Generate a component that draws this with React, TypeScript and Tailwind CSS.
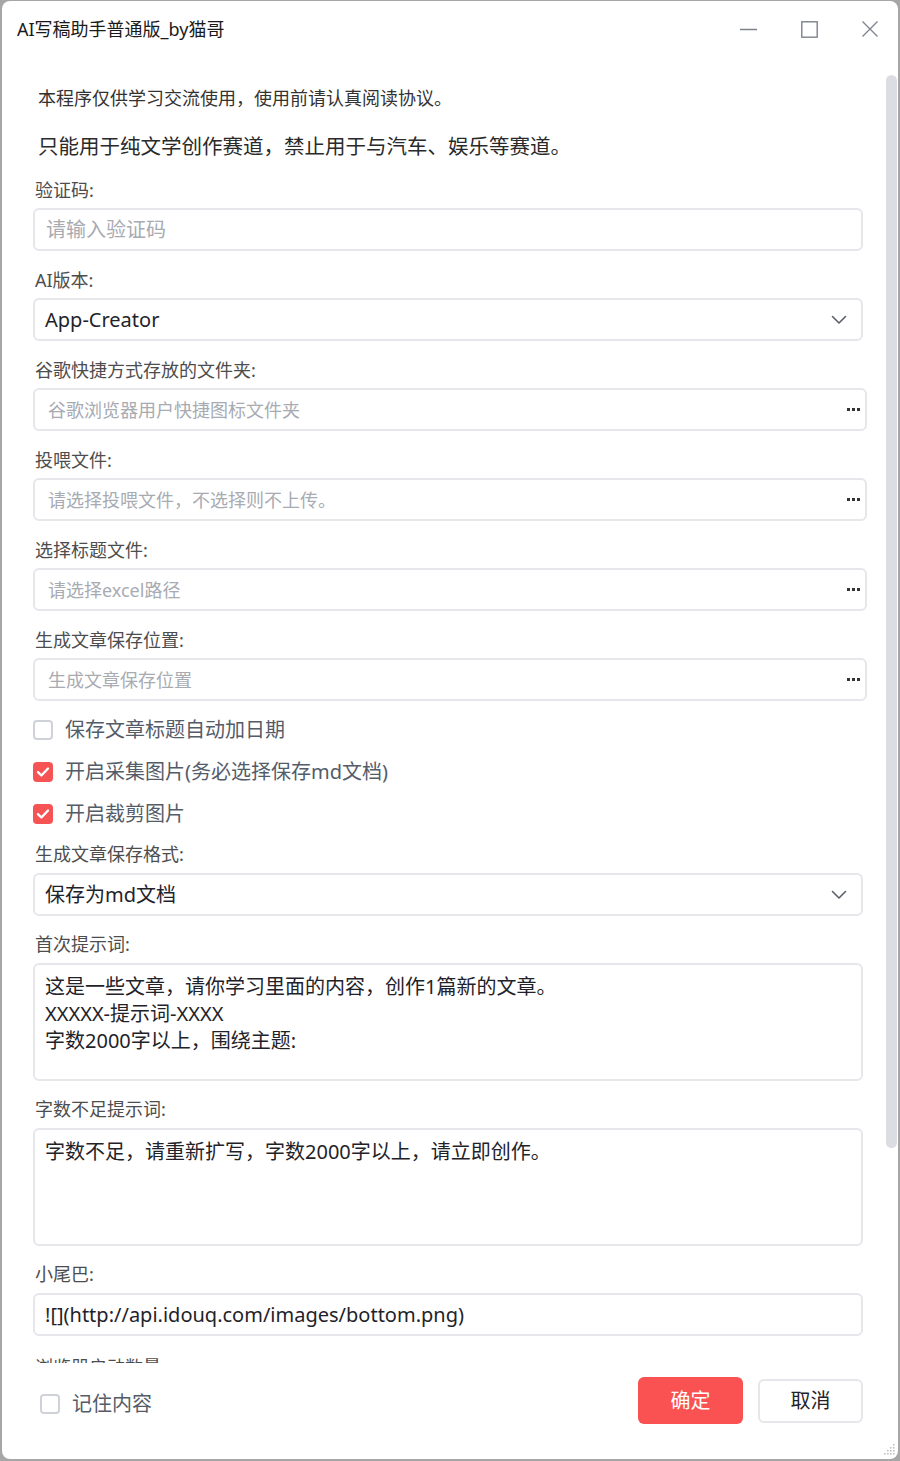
import React from "react";

const FONT = { fontFamily: '"Noto Sans", "Noto Sans CJK SC", sans-serif' };

function Label({ text, mt }: { text: string; mt: string }) {
  return (
    <div className={`${mt} h-[24px] pl-[2px] text-[18px] leading-[24px] text-[#4d4d4d] whitespace-nowrap`}>{text}</div>
  );
}

function Dots() {
  return (
    <div className="flex gap-[2px]">
      <span className="w-[3px] h-[3px] bg-[#333]" />
      <span className="w-[3px] h-[3px] bg-[#333]" />
      <span className="w-[3px] h-[3px] bg-[#333]" />
    </div>
  );
}

function PathInput({ placeholder }: { placeholder: string }) {
  return (
    <div className="mt-[6px] w-[834px] h-[43px] rounded-[6px] border-2 border-[#e6e6eb] flex items-center justify-between pl-[13px] pr-[5px]">
      <span className="text-[18px] leading-[24px] text-[#a8abb2] whitespace-nowrap">{placeholder}</span>
      <Dots />
    </div>
  );
}

function Chevron() {
  return (
    <svg width="16" height="10" viewBox="0 0 16 10" fill="none">
      <path d="M1.5 1.5 L8 8 L14.5 1.5" stroke="#5a5f66" strokeWidth="1.6" strokeLinecap="round" strokeLinejoin="round" />
    </svg>
  );
}

function Select({ value, mt }: { value: string; mt: string }) {
  return (
    <div className={`${mt} w-[830px] h-[43px] rounded-[6px] border-2 border-[#e6e6eb] flex items-center justify-between pl-[10px] pr-[14px]`}>
      <span className="text-[20px] leading-[26px] text-[#1f2329] whitespace-nowrap">{value}</span>
      <Chevron />
    </div>
  );
}

function Check({ checked, label, mt }: { checked: boolean; label: string; mt: string }) {
  return (
    <div className={`${mt} h-[24px] flex items-center gap-[12px]`}>
      {checked ? (
        <div className="w-[20px] h-[20px] rounded-[4px] bg-[#f65454] flex items-center justify-center">
          <svg width="14" height="12" viewBox="0 0 14 12" fill="none">
            <path d="M2 6.2 L5.4 9.5 L12 2.5" stroke="#fff" strokeWidth="2.4" strokeLinecap="round" strokeLinejoin="round" />
          </svg>
        </div>
      ) : (
        <div className="w-[20px] h-[20px] rounded-[4px] border-2 border-[#cfd2d8] bg-white" />
      )}
      <span className="text-[20px] leading-[24px] text-[#545c69] whitespace-nowrap">{label}</span>
    </div>
  );
}

function TextArea({ lines, mt }: { lines: string[]; mt: string }) {
  return (
    <div className={`${mt} w-[830px] h-[118px] rounded-[6px] border-2 border-[#e6e6eb] pl-[10px] pt-[8px]`}>
      {lines.map((l, i) => (
        <div key={i} className="text-[20px] leading-[27px] text-[#1f2329] whitespace-nowrap">{l}</div>
      ))}
    </div>
  );
}

export default function App() {
  return (
    <div className="w-[900px] h-[1461px] bg-[#a6a6a6] pl-[2px] pr-[2px] pt-[1px] pb-[2px]" style={FONT}>
      <div className="relative w-[896px] h-[1458px] bg-white rounded-[8px] flex flex-col overflow-hidden">
        {/* Title bar */}
        <div className="h-[56px] flex items-center justify-between pl-[15px] pr-[20px]">
          <span className="text-[18px] leading-[24px] text-[#1a1a1a] whitespace-nowrap">AI写稿助手普通版_by猫哥</span>
          <div className="flex items-center gap-[44px]">
            <svg width="17" height="16" viewBox="0 0 17 16"><path d="M0 8.5 H17" stroke="#7d838c" strokeWidth="1.4" /></svg>
            <svg width="17" height="17" viewBox="0 0 17 17"><rect x="0.8" y="0.8" width="15.4" height="15.4" fill="none" stroke="#7d838c" strokeWidth="1.4" /></svg>
            <svg width="16" height="16" viewBox="0 0 16 16"><path d="M0.5 0.5 L15.5 15.5 M15.5 0.5 L0.5 15.5" stroke="#7d838c" strokeWidth="1.3" /></svg>
          </div>
        </div>

        {/* Main */}
        <div className="flex h-[1306px]">
          <div className="flex-1 overflow-hidden pl-[31px]">
            <div className="mt-[29px] pl-[5px] h-[24px] text-[18px] leading-[24px] text-[#333] whitespace-nowrap">本程序仅供学习交流使用，使用前请认真阅读协议。</div>
            <div className="mt-[22px] pl-[5px] h-[28px] text-[20.5px] leading-[28px] text-[#2a2a2a] whitespace-nowrap">只能用于纯文学创作赛道，禁止用于与汽车、娱乐等赛道。</div>

            <Label text="验证码:" mt="mt-[18px]" />
            <div className="mt-[6px] w-[830px] h-[43px] rounded-[6px] border-2 border-[#e6e6eb] flex items-center pl-[11px]">
              <span className="text-[20px] leading-[26px] text-[#a8abb2]">请输入验证码</span>
            </div>

            <Label text="AI版本:" mt="mt-[17px]" />
            <Select value="App-Creator" mt="mt-[6px]" />

            <Label text="谷歌快捷方式存放的文件夹:" mt="mt-[17px]" />
            <PathInput placeholder="谷歌浏览器用户快捷图标文件夹" />

            <Label text="投喂文件:" mt="mt-[17px]" />
            <PathInput placeholder="请选择投喂文件，不选择则不上传。" />

            <Label text="选择标题文件:" mt="mt-[17px]" />
            <PathInput placeholder="请选择excel路径" />

            <Label text="生成文章保存位置:" mt="mt-[17px]" />
            <PathInput placeholder="生成文章保存位置" />

            <Check checked={false} label="保存文章标题自动加日期" mt="mt-[17px]" />
            <Check checked={true} label="开启采集图片(务必选择保存md文档)" mt="mt-[18px]" />
            <Check checked={true} label="开启裁剪图片" mt="mt-[18px]" />

            <Label text="生成文章保存格式:" mt="mt-[16px]" />
            <Select value="保存为md文档" mt="mt-[7px]" />

            <Label text="首次提示词:" mt="mt-[16px]" />
            <TextArea mt="mt-[7px]" lines={["这是一些文章，请你学习里面的内容，创作1篇新的文章。", "XXXXX-提示词-XXXX", "字数2000字以上，围绕主题:"]} />

            <Label text="字数不足提示词:" mt="mt-[16px]" />
            <TextArea mt="mt-[7px]" lines={["字数不足，请重新扩写，字数2000字以上，请立即创作。"]} />

            <Label text="小尾巴:" mt="mt-[16px]" />
            <div className="mt-[7px] w-[830px] h-[43px] rounded-[6px] border-2 border-[#e6e6eb] flex items-center pl-[10px]">
              <span className="text-[20px] leading-[26px] text-[#1f2329] whitespace-nowrap">![](http://api.idouq.com/images/bottom.png)</span>
            </div>

            <Label text="浏览器启动数量:" mt="mt-[19px]" />
          </div>

          {/* Scrollbar */}
          <div className="w-[12px] pt-[18px]">
            <div className="w-[11px] h-[1073px] rounded-full bg-[#dcdde2]" />
          </div>
        </div>

        {/* Footer */}
        <div className="flex-1 flex items-start justify-between pl-[38px] pr-[35px] pt-[14px]">
          <div className="mt-[14px] flex items-center gap-[12px]">
            <div className="w-[20px] h-[20px] rounded-[4px] border-2 border-[#cfd2d8]" />
            <span className="text-[20px] leading-[26px] text-[#545c69]">记住内容</span>
          </div>
          <div className="flex items-start gap-[15px]">
            <div className="w-[105px] h-[47px] rounded-[6px] bg-[#fa5252] flex items-center justify-center text-[20px] leading-[26px] text-white">确定</div>
            <div className="mt-[2px] w-[105px] h-[44px] rounded-[6px] border-2 border-[#e6e6eb] bg-white flex items-center justify-center text-[20px] leading-[26px] text-[#1f2329]">取消</div>
          </div>
        </div>

        {/* Resize grip */}
        <svg className="absolute right-[2px] bottom-[2px]" width="14" height="14" viewBox="0 0 14 14">
          {[
            [12, 2], [12, 5], [9, 5], [12, 8], [9, 8], [6, 8], [12, 11], [9, 11], [6, 11], [3, 11],
          ].map(([x, y], i) => (
            <rect key={i} x={x - 1} y={y - 1} width="1.6" height="1.6" fill="#c4c4c4" />
          ))}
        </svg>
      </div>
    </div>
  );
}
